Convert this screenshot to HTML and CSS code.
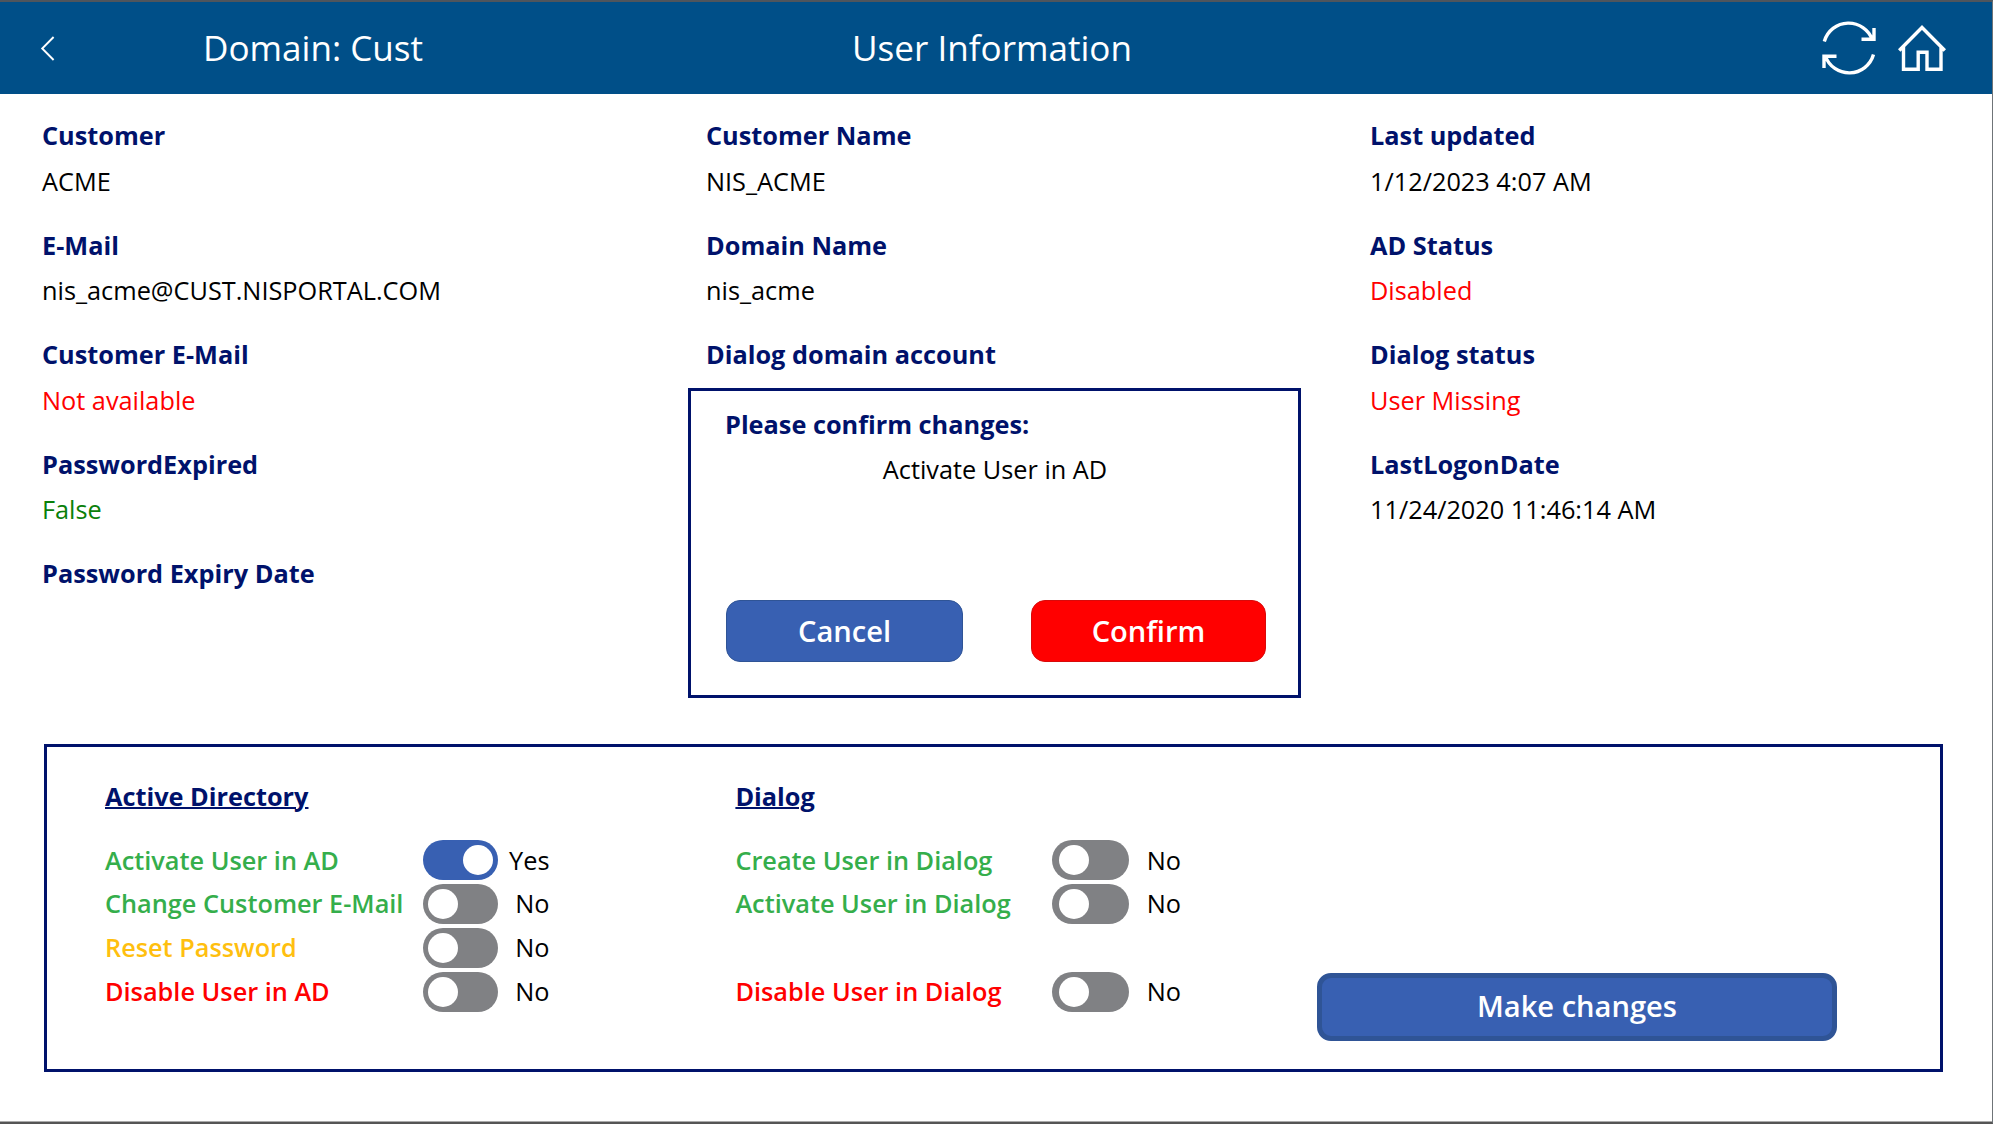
FILE: index.html
```html
<!DOCTYPE html>
<html lang="en">
<head>
<meta charset="utf-8">
<title>User Information</title>
<link rel="stylesheet" href="styles.css">
</head>
<body>
<div class="screen">
  <header class="topbar">
    <svg class="icon-back" viewBox="0 0 16 28"><path d="M13.600 3 2.200 14.500l11.400 11.500"/></svg>
    <div class="domain">Domain: Cust</div>
    <h1 class="title">User Information</h1>
    <svg class="icon-refresh" viewBox="0 0 56 56"><path d="M3.300 21.500A25.300 25.300 0 0 1 51.500 20M53 8v11.300H40.500M52.500 34.500A25.300 25.300 0 0 1 4.300 36M3 48V36.200h12.500"/></svg>
    <svg class="icon-home" viewBox="0 0 48 46"><path d="M1.200 25.500 24 2.500 46.800 25.500M5.500 22v22.300h14.700V27.200h8.800v17.100H43V22"/></svg>
  </header>

  <main class="content">
    <section class="info">
      <dl class="col">
        <dt>Customer</dt><dd>ACME</dd>
        <dt>E-Mail</dt><dd>nis_acme@CUST.NISPORTAL.COM</dd>
        <dt>Customer E-Mail</dt><dd class="bad">Not available</dd>
        <dt>PasswordExpired</dt><dd class="good">False</dd>
        <dt>Password Expiry Date</dt><dd></dd>
      </dl>
      <dl class="col">
        <dt>Customer Name</dt><dd>NIS_ACME</dd>
        <dt>Domain Name</dt><dd>nis_acme</dd>
        <dt>Dialog domain account</dt><dd></dd>
      </dl>
      <dl class="col">
        <dt>Last updated</dt><dd>1/12/2023 4:07 AM</dd>
        <dt>AD Status</dt><dd class="bad">Disabled</dd>
        <dt>Dialog status</dt><dd class="bad">User Missing</dd>
        <dt>LastLogonDate</dt><dd>11/24/2020 11:46:14 AM</dd>
      </dl>
    </section>

    <section class="panel">
      <div class="group">
        <h2>Active Directory</h2>
        <div class="row green"><span class="name">Activate User in AD</span><i class="toggle on"></i><span class="state">Yes</span></div>
        <div class="row green"><span class="name">Change Customer E-Mail</span><i class="toggle"></i><span class="state">No</span></div>
        <div class="row amber"><span class="name">Reset Password</span><i class="toggle"></i><span class="state">No</span></div>
        <div class="row red"><span class="name">Disable User in AD</span><i class="toggle"></i><span class="state">No</span></div>
      </div>
      <div class="group group-dialog">
        <h2>Dialog</h2>
        <div class="row green"><span class="name">Create User in Dialog</span><i class="toggle"></i><span class="state">No</span></div>
        <div class="row green"><span class="name">Activate User in Dialog</span><i class="toggle"></i><span class="state">No</span></div>
        <div class="row"></div>
        <div class="row red"><span class="name">Disable User in Dialog</span><i class="toggle"></i><span class="state">No</span></div>
      </div>
      <button class="btn make">Make changes</button>
    </section>
  </main>

  <div class="confirm" role="dialog">
    <h2>Please confirm changes:</h2>
    <p>Activate User in AD</p>
    <div class="actions">
      <button class="btn cancel">Cancel</button>
      <button class="btn ok">Confirm</button>
    </div>
  </div>
</div>
</body>
</html>
```
FILE: styles.css
```css
* { box-sizing: border-box; }
body { margin: 0; background: #fff; font-family: "Open Sans", sans-serif; font-size: 25.3px; color: #000; }
h1, h2, p, dl, dd { margin: 0; }
.screen {
  position: relative;
  width: 1993px;
  height: 1124px;
  overflow: hidden;
  display: flex;
  flex-direction: column;
  border-top: 2px solid #4f555c;
  border-bottom: 2px solid #555;
  border-right: 1px solid #6f7478;
  box-shadow: inset 0 -1px #aaa;
}

.topbar {
  flex: none;
  height: 92px;
  background: #004f88;
  color: #fff;
  display: flex;
  align-items: center;
  padding: 0 46px 0 40px;
  font-size: 35.1px;
}
.topbar svg { flex: none; fill: none; stroke: #fff; }
.icon-back { width: 16px; height: 28px; stroke-width: 1.9; }
.domain { width: 650px; padding-left: 147px; line-height: 90px; padding-bottom: 2px; }
.title { flex: 1; font-size: inherit; font-weight: 400; line-height: 90px; padding: 0 0 2px 146px; }
.icon-refresh { width: 56px; height: 56px; stroke-width: 3.4; margin-right: 21px; }
.icon-home { width: 48px; height: 46px; stroke-width: 3.4; }

.content { flex: 1; display: flex; flex-direction: column; }
.info {
  height: 650px;
  padding: 18.1px 0 0 42px;
  display: grid;
  grid-template-columns: repeat(3, 664px);
}
.col dt { height: 46px; line-height: 46px; font-weight: 700; color: #00126b; }
.col dd { height: 63.5px; line-height: 45.2px; padding-top: 0.5px; }
.bad { color: #f00; }
.good { color: #0a800a; }

.panel {
  height: 328px;
  width: 1899px;
  margin-left: 44px;
  border: 3px solid #00126b;
  display: flex;
  padding: 26px 0 0 58px;
}
.panel h2 {
  font-size: 25.3px;
  line-height: 46px;
  height: 65.3px;
  font-weight: 700;
  color: #00126b;
  text-decoration: underline;
  text-decoration-thickness: 2px;
}
.group { width: 630.4px; }
.group-dialog { width: 581.6px; }
.row { height: 43.8px; display: flex; align-items: center; }
.name { width: 318px; margin-top: -1px; font-weight: 600; white-space: nowrap; }
.group-dialog .name { width: 317px; }
.group-dialog .toggle { width: 77px; padding-left: 7px; }
.state { width: 51.5px; margin-top: -1px; text-align: right; }
.green .name { color: #35ae4b; }
.amber .name { color: #ffbf0f; }
.red .name { color: #f00; }
.toggle { width: 75px; height: 40px; border-radius: 20px; background: #808184; display: flex; align-items: center; padding: 0 5px; }
.toggle::before { content: ""; width: 30px; height: 30px; border-radius: 50%; background: #fff; }
.toggle.on { background: #3860b2; justify-content: flex-end; }

.btn {
  font: 600 29.1px "Open Sans", sans-serif;
  color: #fff;
  background: #3860b2;
  border: 1px solid #2f5496;
  border-radius: 14px;
  padding: 0;
}
.make { width: 520px; height: 68px; margin-top: 200px; border-width: 5px; padding-bottom: 2px; }

.confirm {
  position: absolute;
  left: 688px;
  top: 386px;
  width: 613px;
  height: 310px;
  border: 3px solid #00126b;
  background: #fff;
  padding: 10px 32px 0 35px;
}
.confirm h2 { font-size: 25.3px; line-height: 46px; color: #00126b; margin-left: -1px; }
.confirm p { line-height: 45px; text-align: center; height: 153px; margin-right: 2px; }
.actions { display: flex; justify-content: space-between; }
.cancel { width: 237px; height: 62px; }
.ok { width: 235px; height: 62px; background: #f00; border-color: #d80a0a; }
```
